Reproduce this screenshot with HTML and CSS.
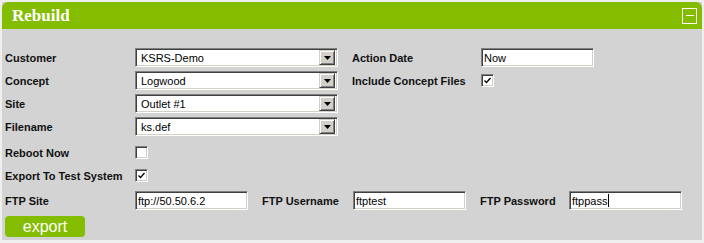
FILE: index.html
```html
<!DOCTYPE html>
<html lang="en">
<head>
  <meta charset="UTF-8">
  <title>Rebuild</title>
  <link rel="stylesheet" href="styles.css">
</head>
<body>
  <div class="panel">
    <div class="panel-header">
      <h1 class="panel-title">Rebuild</h1>
      <span class="collapse-btn"><span class="collapse-line"></span></span>
    </div>

    <div class="panel-body">
      <div class="row">
        <span class="label">Customer</span>
        <span class="combo"><span class="combo-text">KSRS-Demo</span><span class="combo-btn"><svg width="7" height="4" viewBox="0 0 7 4"><path d="M0 0h7L3.5 4z" fill="#000"/></svg></span></span>
        <span class="label label-right">Action Date</span>
        <span class="field">Now</span>
      </div>
      <div class="row">
        <span class="label">Concept</span>
        <span class="combo"><span class="combo-text">Logwood</span><span class="combo-btn"><svg width="7" height="4" viewBox="0 0 7 4"><path d="M0 0h7L3.5 4z" fill="#000"/></svg></span></span>
        <span class="label label-right">Include Concept Files</span>
        <span class="check"><svg width="9" height="9" viewBox="0 0 9 9"><path d="M1.5 4.5l2 2 4-4.5" fill="none" stroke="#000" stroke-width="1.3"/></svg></span>
      </div>
      <div class="row">
        <span class="label">Site</span>
        <span class="combo"><span class="combo-text">Outlet #1</span><span class="combo-btn"><svg width="7" height="4" viewBox="0 0 7 4"><path d="M0 0h7L3.5 4z" fill="#000"/></svg></span></span>
      </div>
      <div class="row">
        <span class="label">Filename</span>
        <span class="combo"><span class="combo-text">ks.def</span><span class="combo-btn"><svg width="7" height="4" viewBox="0 0 7 4"><path d="M0 0h7L3.5 4z" fill="#000"/></svg></span></span>
      </div>
      <div class="row row-check">
        <span class="label">Reboot Now</span>
        <span class="check"></span>
      </div>
      <div class="row">
        <span class="label">Export To Test System</span>
        <span class="check"><svg width="9" height="9" viewBox="0 0 9 9"><path d="M1.5 4.5l2 2 4-4.5" fill="none" stroke="#000" stroke-width="1.3"/></svg></span>
      </div>
      <div class="row row-ftp">
        <span class="label">FTP Site</span>
        <span class="field">ftp://50.50.6.2</span>
        <span class="label label-user">FTP Username</span>
        <span class="field">ftptest</span>
        <span class="label label-pass">FTP Password</span>
        <span class="field">ftppass<span class="caret"></span></span>
      </div>
      <button type="button" class="btn-export">export</button>
    </div>
  </div>
</body>
</html>
```

FILE: styles.css
```css
/* Pagina */
body {
  margin: 0;
  padding: 2px;
  background-color: #efefef;
  font-family: "Liberation Sans", Arial, sans-serif;
  font-size: 11px;
  color: #111;
}

/* Painel */
.panel {
  width: 700px;
  height: 238px;
  background-color: #d3d3d3;
}

.panel-header {
  display: flex;
  align-items: center;
  justify-content: space-between;
  height: 27px;
  padding: 0 5px 0 10px;
  background-color: #84bd00;
  border-radius: 6px 6px 0 0;
}

.panel-title {
  margin: 0;
  font-family: "Liberation Serif", "Times New Roman", serif;
  font-size: 17px;
  font-weight: bold;
  color: #fff;
}

.collapse-btn {
  display: flex;
  align-items: center;
  justify-content: center;
  width: 13px;
  height: 14px;
  border: 1px solid #fff;
}

.collapse-line {
  width: 8px;
  height: 1px;
  background-color: #fff;
}

/* Corpo */
.panel-body {
  padding: 17px 0 0 3px;
}

.row {
  display: flex;
  align-items: center;
  height: 23px;
}

.row-check {
  margin-top: 3px;
}

.row-ftp {
  margin-top: 2px;
}

.label {
  flex: none;
  width: 130px;
  font-weight: bold;
}

.label-right {
  width: 129px;
  margin-left: 14px;
}

.label-user {
  width: 91px;
  margin-left: 14px;
}

.label-pass {
  width: 89px;
  margin-left: 14px;
}

/* Campos */
.combo,
.field,
.check {
  flex: none;
  box-sizing: border-box;
  background-color: #fff;
  border-top: 1px solid #808080;
  border-left: 1px solid #808080;
  border-right: 1px solid #fff;
  border-bottom: 1px solid #fff;
  box-shadow: inset 1px 1px 0 #404040, inset -1px -1px 0 #d4d0c8;
}

.combo {
  display: flex;
  align-items: center;
  width: 203px;
  height: 19px;
  padding: 2px 2px 2px 5px;
  color: #000;
}

.combo-text {
  flex: 1;
}

.combo-btn {
  display: flex;
  align-items: center;
  justify-content: center;
  box-sizing: border-box;
  width: 16px;
  height: 15px;
  background-color: #d4d0c8;
  border-top: 1px solid #d4d0c8;
  border-left: 1px solid #d4d0c8;
  border-right: 1px solid #404040;
  border-bottom: 1px solid #404040;
  box-shadow: inset 1px 1px 0 #fff, inset -1px -1px 0 #808080;
}

.field {
  display: flex;
  align-items: center;
  width: 113px;
  height: 19px;
  padding: 0 1px 0 2px;
  color: #000;
}

.caret {
  width: 1px;
  height: 13px;
  margin-left: 1px;
  background-color: #000;
}

.check {
  display: flex;
  align-items: center;
  justify-content: center;
  width: 13px;
  height: 13px;
}

/* Botao */
.btn-export {
  display: block;
  width: 80px;
  height: 21px;
  margin-top: 4px;
  padding: 0;
  border: none;
  border-radius: 4px;
  background-color: #84bd00;
  font-family: "Liberation Sans", Arial, sans-serif;
  font-size: 16px;
  line-height: 21px;
  color: #fff;
}
```
